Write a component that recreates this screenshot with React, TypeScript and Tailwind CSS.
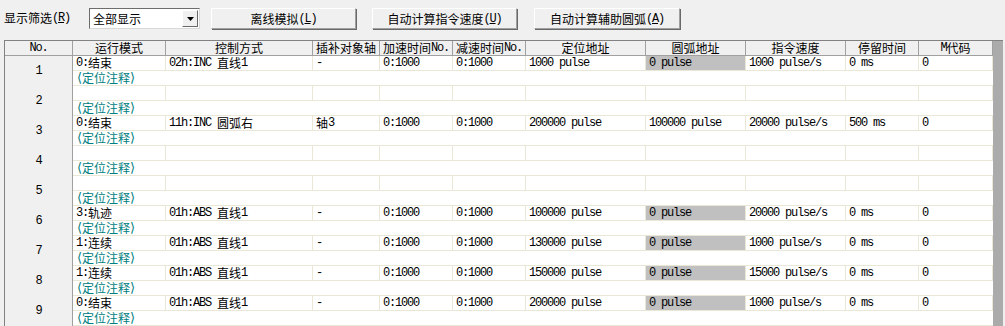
import React from "react";

const COLS = [68, 93, 147, 67, 73, 73, 120, 100, 100, 73, 74];
const HEAD = ["No.", "运行模式", "控制方式", "插补对象轴", "加速时间No.", "减速时间No.", "定位地址", "圆弧地址", "指令速度", "停留时间", "M代码"];

type Row = { no: number; cells?: string[]; grayArc?: boolean };

const ROWS: Row[] = [
  { no: 1, cells: ["0:结束", "02h:INC 直线1", "-", "0:1000", "0:1000", "1000 pulse", "0 pulse", "1000 pulse/s", "0 ms", "0"], grayArc: true },
  { no: 2 },
  { no: 3, cells: ["0:结束", "11h:INC 圆弧右", "轴3", "0:1000", "0:1000", "200000 pulse", "100000 pulse", "20000 pulse/s", "500 ms", "0"] },
  { no: 4 },
  { no: 5 },
  { no: 6, cells: ["3:轨迹", "01h:ABS 直线1", "-", "0:1000", "0:1000", "100000 pulse", "0 pulse", "20000 pulse/s", "0 ms", "0"], grayArc: true },
  { no: 7, cells: ["1:连续", "01h:ABS 直线1", "-", "0:1000", "0:1000", "130000 pulse", "0 pulse", "1000 pulse/s", "0 ms", "0"], grayArc: true },
  { no: 8, cells: ["1:连续", "01h:ABS 直线1", "-", "0:1000", "0:1000", "150000 pulse", "0 pulse", "15000 pulse/s", "0 ms", "0"], grayArc: true },
  { no: 9, cells: ["0:结束", "01h:ABS 直线1", "-", "0:1000", "0:1000", "200000 pulse", "0 pulse", "1000 pulse/s", "0 ms", "0"], grayArc: true },
];

function T({ s }: { s: string }) {
  const parts = s.split(/([\x00-\x7F]+)/).filter((p) => p.length > 0);
  return (
    <>
      {parts.map((p, i) =>
        /^[\x00-\x7F]+$/.test(p) ? (
          <span key={i} className="font-['Liberation_Mono'] tracking-[-1.2px] whitespace-pre">
            {p}
          </span>
        ) : (
          <span key={i}>{p}</span>
        )
      )}
    </>
  );
}

function Btn({ label, acc, w }: { label: string; acc: string; w: string }) {
  return (
    <div
      className={`${w} h-[21px] flex items-center justify-center bg-[#f0f0f0] border-t border-l border-t-white border-l-white border-r border-b border-r-[#a0a0a0] border-b-[#a0a0a0] shadow-[1px_1px_0_#696969] text-[12px] leading-[14px] text-black`}
    >
      <span>{label}</span>
      <span className="font-['Liberation_Mono'] tracking-[-1.2px]">(</span>
      <span className="font-['Liberation_Mono'] tracking-[-1.2px] underline">{acc}</span>
      <span className="font-['Liberation_Mono'] tracking-[-1.2px]">)</span>
    </div>
  );
}

export default function App() {
  return (
    <div className="w-[1005px] h-[326px] overflow-hidden bg-[#f0f0f0] font-['Noto_Sans_CJK_SC',sans-serif] text-[12px] leading-[14px] text-black">
      {/* toolbar */}
      <div className="h-[40px] flex items-start pt-[8px] pl-[4px]">
        <div className="w-[85px] h-[20px] flex items-center">
          <span>显示筛选</span>
          <span className="font-['Liberation_Mono'] tracking-[-1.2px]">(</span>
          <span className="font-['Liberation_Mono'] tracking-[-1.2px] underline">R</span>
          <span className="font-['Liberation_Mono'] tracking-[-1.2px]">)</span>
        </div>
        <div className="w-[111px] h-[21px] bg-white border border-t-[#6d6d6d] border-l-[#6d6d6d] border-r-[#d8d8d8] border-b-[#d8d8d8] flex items-center">
          <span className="flex-1 pl-[3px]">全部显示</span>
          <div className="w-[16px] h-[17px] mr-[1px] bg-[#f0f0f0] border border-t-white border-l-white border-r-[#696969] border-b-[#696969] flex items-center justify-center">
            <svg width="7" height="4" viewBox="0 0 7 4">
              <polygon points="0,0 7,0 3.5,4" fill="#000" />
            </svg>
          </div>
        </div>
        <div className="ml-[11px]">
          <Btn label="离线模拟" acc="L" w="w-[145px]" />
        </div>
        <div className="ml-[16px]">
          <Btn label="自动计算指令速度" acc="U" w="w-[145px]" />
        </div>
        <div className="ml-[17px]">
          <Btn label="自动计算辅助圆弧" acc="A" w="w-[146px]" />
        </div>
      </div>

      {/* grid */}
      <div className="ml-[4px] mr-[2px] h-[286px] flex border-l border-t border-[#828282]">
        <div className="w-[988px] bg-white">
          {/* header */}
          <div className="flex h-[15px]">
            {HEAD.map((h, i) => (
              <div
                key={i}
                style={{ width: COLS[i] }}
                className="shrink-0 h-[15px] bg-[#f0f0f0] border-r border-b border-[#a0a0a0] flex items-center justify-center whitespace-nowrap"
              >
                <T s={h} />
              </div>
            ))}
          </div>
          {ROWS.map((r) => (
            <div key={r.no} className="flex h-[30px]">
              <div
                style={{ width: COLS[0] }}
                className="shrink-0 h-[30px] bg-[#f0f0f0] border-r border-[#a0a0a0] flex items-center justify-center"
              >
                <T s={String(r.no)} />
              </div>
              <div className="flex-1 flex flex-col">
                <div className="flex h-[15px]">
                  {COLS.slice(1).map((w, j) => {
                    const txt = r.cells ? r.cells[j] : "";
                    const gray = r.grayArc && j === 6;
                    return (
                      <div
                        key={j}
                        style={{ width: w }}
                        className={`shrink-0 h-[15px] border-r border-b border-[#ebe7d6] pl-[3px] flex items-center whitespace-nowrap ${gray ? "bg-[#c0c0c0]" : "bg-white"}`}
                      >
                        <T s={txt} />
                      </div>
                    );
                  })}
                </div>
                <div className="h-[15px] border-b border-[#ebe7d6] pl-[4px] flex items-center text-[#008080] whitespace-nowrap">
                  <span className="font-['DejaVu_Sans'] text-[13px] leading-[14px]">⟨</span>
                  <span>定位注释</span>
                  <span className="font-['DejaVu_Sans'] text-[13px] leading-[14px]">⟩</span>
                </div>
              </div>
            </div>
          ))}
        </div>
        <div className="flex-1 bg-[#ababab]" />
      </div>
    </div>
  );
}
